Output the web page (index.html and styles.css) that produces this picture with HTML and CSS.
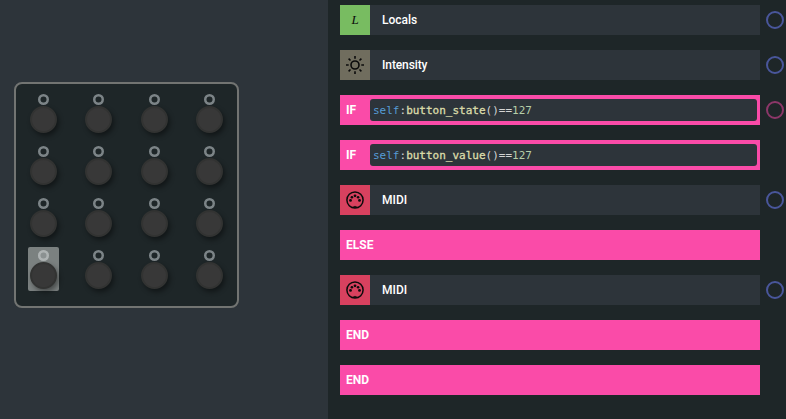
FILE: index.html
```html
<!DOCTYPE html>
<html lang="en">
<head>
<meta charset="utf-8">
<title>Control editor</title>
<link rel="stylesheet" href="styles.css">
</head>
<body>
<svg class="defs" aria-hidden="true">
  <symbol id="midi" viewBox="0 0 20 20">
    <circle cx="10" cy="10" r="8.1" fill="none" stroke="currentColor" stroke-width="1.5"/>
    <g fill="currentColor">
      <circle cx="5.5" cy="10.4" r="1.4"/><circle cx="6.9" cy="7.3" r="1.3"/><circle cx="10" cy="5.8" r="1.4"/><circle cx="13.1" cy="7.3" r="1.3"/><circle cx="14.5" cy="10.4" r="1.4"/>
      <path d="M7.7 17.7V16.6H9L10 15.7 11 16.6H12.3V17.7Z"/>
    </g>
  </symbol>
</svg>
<main class="app">
  <section class="preview">
    <div class="module">
      <div class="control"><i class="led"></i><i class="knob"></i></div>
      <div class="control"><i class="led"></i><i class="knob"></i></div>
      <div class="control"><i class="led"></i><i class="knob"></i></div>
      <div class="control"><i class="led"></i><i class="knob"></i></div>
      <div class="control"><i class="led"></i><i class="knob"></i></div>
      <div class="control"><i class="led"></i><i class="knob"></i></div>
      <div class="control"><i class="led"></i><i class="knob"></i></div>
      <div class="control"><i class="led"></i><i class="knob"></i></div>
      <div class="control"><i class="led"></i><i class="knob"></i></div>
      <div class="control"><i class="led"></i><i class="knob"></i></div>
      <div class="control"><i class="led"></i><i class="knob"></i></div>
      <div class="control"><i class="led"></i><i class="knob"></i></div>
      <div class="control selected"><i class="led"></i><i class="knob"></i></div>
      <div class="control"><i class="led"></i><i class="knob"></i></div>
      <div class="control"><i class="led"></i><i class="knob"></i></div>
      <div class="control"><i class="led"></i><i class="knob"></i></div>
    </div>
  </section>
  <section class="actions">
    <div class="row"><div class="block"><span class="icon locals">L</span><span class="name">Locals</span></div><i class="pick"></i></div>
    <div class="row"><div class="block"><span class="icon intensity"><svg width="20" height="20" viewBox="0 0 20 20" fill="none" stroke="currentColor" stroke-width="1.6"><circle cx="10" cy="10" r="4"/><path d="M10 1V3.7M10 16.3V19M1 10H3.7M16.3 10H19M3.6 3.6L5.5 5.5M14.5 14.5L16.4 16.4M3.6 16.4L5.5 14.5M14.5 5.5L16.4 3.6"/></svg></span><span class="name tight">Intensity</span></div><i class="pick"></i></div>
    <div class="row"><div class="block flow"><span class="keyword">IF</span><code class="code"><span class="self">self</span>:<span class="fn">button_state</span>()==<span class="num">127</span></code></div><i class="pick branch"></i></div>
    <div class="row"><div class="block flow"><span class="keyword">IF</span><code class="code"><span class="self">self</span>:<span class="fn">button_value</span>()==<span class="num">127</span></code></div></div>
    <div class="row"><div class="block"><span class="icon midi"><svg width="20" height="20"><use href="#midi"/></svg></span><span class="name">MIDI</span></div><i class="pick"></i></div>
    <div class="row"><div class="block flow"><span class="keyword">ELSE</span></div></div>
    <div class="row"><div class="block"><span class="icon midi"><svg width="20" height="20"><use href="#midi"/></svg></span><span class="name">MIDI</span></div><i class="pick"></i></div>
    <div class="row"><div class="block flow"><span class="keyword">END</span></div></div>
    <div class="row"><div class="block flow"><span class="keyword">END</span></div></div>
  </section>
</main>
</body>
</html>
```
FILE: styles.css
```css
* { box-sizing: border-box; }
body { margin: 0; overflow: hidden; background: #1e2628; color: #fff; font: 500 12px/16px Roboto, "Liberation Sans", sans-serif; }
.defs { display: none; }
.app { display: flex; height: 419px; }
.preview { width: 328px; flex: none; background: #2d343a; padding: 82px 0 0 14px; }
.module { width: 225px; height: 226px; border: 2px solid #727472; border-radius: 8px; background: #1e2628; padding-top: 7px; display: grid; grid-template-columns: repeat(4, 1fr); grid-auto-rows: 52px; justify-items: center; }
.control { width: 31px; height: 44px; display: flex; flex-direction: column; align-items: center; padding-top: 3px; border-radius: 2px; }
.selected { background: #7b8180; }
.led { width: 11px; height: 11px; box-shadow: inset 0 0 0 2.5px #7c8487; border-radius: 50%; }
.selected .led { box-shadow: inset 0 0 0 2.5px #aeb3b3; background: #8b9191; }
.knob { width: 27px; height: 27px; margin-top: 1px; border: 2px solid #323332; border-radius: 50%; background: #383838; box-shadow: 2px 3px 5px rgba(0, 0, 0, .42); }
.actions { flex: 1; display: flex; flex-direction: column; gap: 15px; padding: 5px 0 0 12px; }
.row { display: flex; align-items: center; gap: 6px; height: 30px; }
.block { width: 420px; height: 30px; display: flex; align-items: center; background: #2d343a; }
.icon { width: 30px; height: 30px; display: flex; align-items: center; justify-content: center; color: #0b0b0b; }
.icon svg { display: block; }
.locals { background: #78bc61; font: italic 400 13px/16px "Liberation Serif", serif; }
.intensity { background: #706d5e; }
.midi { background: #d8415f; }
.name { padding-left: 12px; }
.tight { letter-spacing: -.1px; }
.flow { background: #fa4ba8; padding: 0 3px 0 6px; }
.keyword { width: 24px; font-weight: 700; }
.code { flex: 1; height: 22px; padding-left: 3px; border-radius: 3px; background: #2d343a; color: #d4d4d4; font: 11px/24px "DejaVu Sans Mono", monospace; }
.self { color: #569cd6; }
.fn { color: #dcdcaa; -webkit-text-stroke: .3px #dcdcaa; }
.num { color: #b5cea8; }
.pick { width: 18px; height: 18px; border: 2px solid #49569b; border-radius: 50%; }
.branch { border-color: #8c3769; }
```
